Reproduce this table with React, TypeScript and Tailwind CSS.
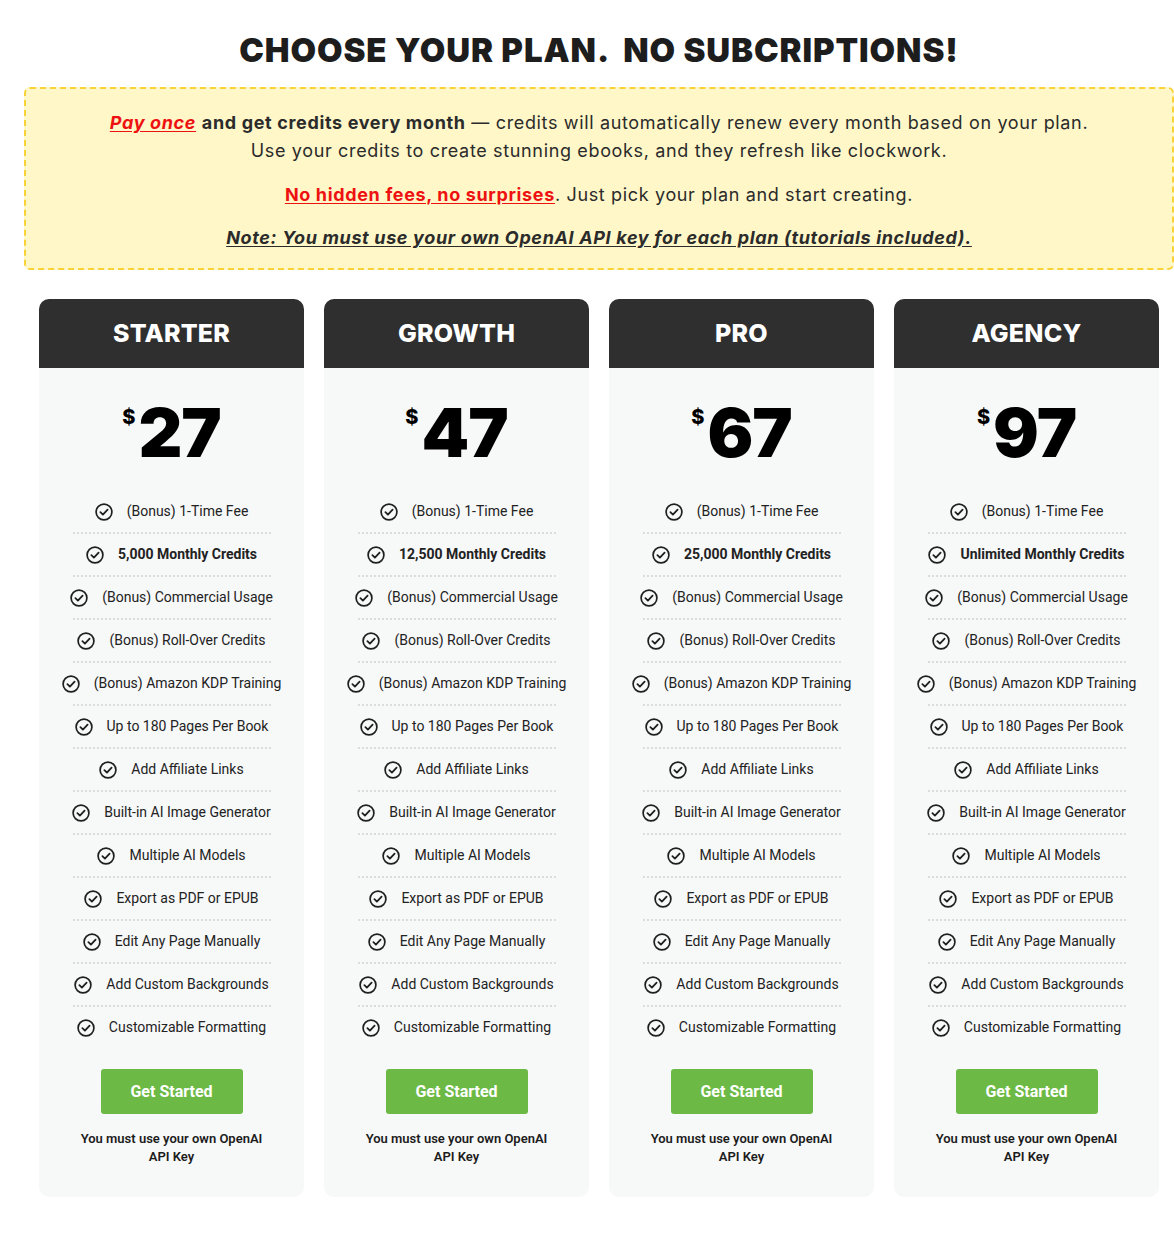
import React from "react";

const plans = [
  { name: "STARTER", price: "27", credits: "5,000 Monthly Credits" },
  { name: "GROWTH", price: "47", credits: "12,500 Monthly Credits" },
  { name: "PRO", price: "67", credits: "25,000 Monthly Credits" },
  { name: "AGENCY", price: "97", credits: "Unlimited Monthly Credits" },
];

const features = (credits: string) => [
  { text: "(Bonus) 1-Time Fee" },
  { text: credits, bold: true },
  { text: "(Bonus) Commercial Usage" },
  { text: "(Bonus) Roll-Over Credits" },
  { text: "(Bonus) Amazon KDP Training" },
  { text: "Up to 180 Pages Per Book" },
  { text: "Add Affiliate Links" },
  { text: "Built-in AI Image Generator" },
  { text: "Multiple AI Models" },
  { text: "Export as PDF or EPUB" },
  { text: "Edit Any Page Manually" },
  { text: "Add Custom Backgrounds" },
  { text: "Customizable Formatting" },
];

function CheckIcon() {
  return (
    <svg width="18" height="18" viewBox="0 0 18 18" fill="none" className="shrink-0">
      <circle cx="9" cy="9" r="7.9" stroke="#1f1f1f" strokeWidth="1.7" />
      <path d="M5.4 9.2 L7.9 11.6 L12.6 6.6" stroke="#1f1f1f" strokeWidth="1.8" strokeLinecap="round" strokeLinejoin="round" />
    </svg>
  );
}

function PlanCard({ plan }: { plan: (typeof plans)[number] }) {
  const items = features(plan.credits);
  return (
    <div className="flex flex-col rounded-[10px] bg-[#f7f8f8] overflow-hidden">
      {/* header */}
      <div className="h-[69px] bg-[#2f2f2f] flex items-center justify-center">
        <span className="text-white text-[25px] font-extrabold tracking-[0.2px] font-['Inter',sans-serif]">
          {plan.name}
        </span>
      </div>

      {/* price */}
      <div className="h-[123px] flex items-start justify-center pt-[30px] font-['Inter',sans-serif] text-black">
        <span className="text-[20px] font-extrabold leading-none mt-[9px] mr-[3px]">$</span>
        <span className="text-[68px] font-black leading-none tracking-[-1px]">{plan.price}</span>
      </div>

      {/* features */}
      <div className="flex flex-col font-['Roboto',sans-serif] text-[14px] text-[#222]">
        {items.map((f, i) => (
          <div key={i}>
            <div className="h-[41px] flex items-center justify-center gap-[14px]">
              <CheckIcon />
              <span className={f.bold ? "font-bold" : ""}>{f.text}</span>
            </div>
            {i < items.length - 1 && (
              <div className="w-[198px] mx-auto border-t-2 border-dotted border-[#dcdcdc]" />
            )}
          </div>
        ))}
      </div>

      {/* cta */}
      <div className="flex flex-col items-center pt-[21px] pb-[31px] font-['Roboto',sans-serif]">
        <button className="w-[142px] h-[45px] rounded-[3px] bg-[#6cba45] text-white text-[16px] font-bold">
          Get Started
        </button>
        <p className="mt-[16px] w-[192px] text-center text-[13px] leading-[18px] font-semibold text-[#1c1c1c]">
          You must use your own OpenAI API Key
        </p>
      </div>
    </div>
  );
}

export default function App() {
  return (
    <div className="min-h-screen bg-white">
      <div className="w-[1150px] ml-[24px] pt-[30px] pb-[45px]">
        <h1 className="text-center text-[33px] leading-[40px] font-black text-[#1d1d1d] tracking-[0.9px] font-['Inter',sans-serif] whitespace-pre">
          {"CHOOSE YOUR PLAN.  NO SUBCRIPTIONS!"}
        </h1>

        {/* info banner */}
        <div className="mt-[17px] h-[183px] rounded-[6px] border-2 border-dashed border-[#f9d237] bg-[#fff7c8] flex flex-col items-center pt-[20px] text-[18px] tracking-[0.65px] text-[#2b2b2b] font-['Inter',sans-serif]">
          <p className="leading-[28px] text-center">
            <a className="text-[#ee1111] font-bold italic underline underline-offset-2">Pay once</a>{" "}
            <span className="font-bold">and get credits every month</span> — credits will automatically renew every month based on your plan.
            <br />
            Use your credits to create stunning ebooks, and they refresh like clockwork.
          </p>
          <p className="mt-[16px] leading-[28px] text-center">
            <span className="text-[#ee1111] font-bold underline underline-offset-2">No hidden fees, no surprises</span>. Just pick your plan and start creating.
          </p>
          <p className="mt-[15px] leading-[28px] text-center font-bold italic underline underline-offset-2">
            Note: You must use your own OpenAI API key for each plan (tutorials included).
          </p>
        </div>

        {/* plans */}
        <div className="mt-[29px] px-[15px] grid grid-cols-4 gap-[20px]">
          {plans.map((p) => (
            <PlanCard key={p.name} plan={p} />
          ))}
        </div>
      </div>
    </div>
  );
}
